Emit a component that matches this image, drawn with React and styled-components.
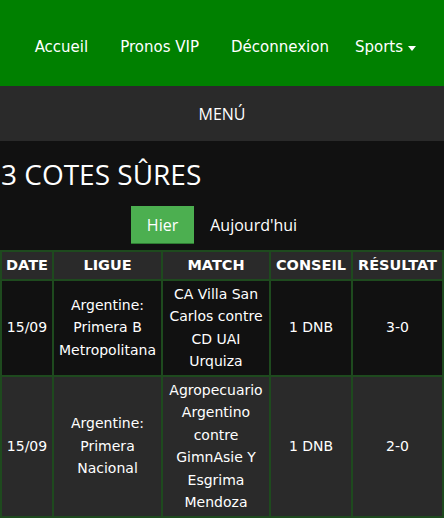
import React, { useState } from "react"
import styled, { createGlobalStyle } from "styled-components"

const GlobalStyle = createGlobalStyle`
  html, body {
    margin: 0;
    padding: 0;
    background: #111111;
  }
  body {
    font-family: "DejaVu Sans", Verdana, sans-serif;
    color: #ffffff;
  }
`

const TopBar = styled.nav`
  height: 86px;
  box-sizing: border-box;
  padding: 8px 12px 0 0;
  background: #008000;
  display: flex;
  align-items: center;
  justify-content: flex-end;
`

const NavLink = styled.a`
  display: flex;
  align-items: center;
  gap: 5px;
  padding: 0 16px 0 ${p => (p.$narrow ? "10px" : "16px")};
  font-size: 15px;
  color: #ffffff;
  text-decoration: none;
  cursor: pointer;
`

const Caret = styled.span`
  width: 0;
  height: 0;
  border-left: 4px solid transparent;
  border-right: 4px solid transparent;
  border-top: 5px solid #ffffff;
  margin-top: 2px;
`

const MenuBar = styled.div`
  height: 55px;
  background: #2a2a2a;
  display: flex;
  align-items: center;
  justify-content: center;
  font-family: "Open Sans", "Noto Sans", sans-serif;
  font-size: 16px;
`

const Title = styled.h1`
  margin: 0;
  padding: 12px 0 0 1px;
  font-family: "Open Sans", "Noto Sans", sans-serif;
  font-weight: 400;
  font-size: 28px;
  line-height: 42px;
`

const Tabs = styled.div`
  display: flex;
  justify-content: center;
  padding-top: 11px;
  margin-bottom: 6px;
`

const Tab = styled.button`
  height: 38px;
  padding: 0 16px;
  border: none;
  background: ${p => (p.$active ? "#4caf50" : "transparent")};
  box-shadow: ${p => (p.$active ? "inset 0 -1px 0 #2e7d32" : "none")};
  color: #ffffff;
  font-family: "Open Sans", "Noto Sans", sans-serif;
  font-size: 16px;
  cursor: pointer;
`

const Table = styled.table`
  width: 442px;
  border-collapse: collapse;
  table-layout: fixed;
`

const Row = styled.tr`
  background: ${p => (p.$alt ? "#2a2a2a" : "#111111")};
`

const HeadCell = styled.th`
  border: 2px solid #1e4a1e;
  padding: 2px 1px;
  font-size: 14.5px;
  line-height: 22.5px;
  font-weight: 700;
  text-align: center;
  white-space: nowrap;
`

const Cell = styled.td`
  border: 2px solid #1e4a1e;
  padding: 2px;
  font-size: 14px;
  line-height: 22.5px;
  text-align: center;
  vertical-align: middle;
`

const tips = [
  {
    date: "15/09",
    league: "Argentine: Primera B Metropolitana",
    match: "CA Villa San Carlos contre CD UAI Urquiza",
    tip: "1 DNB",
    result: "3-0",
  },
  {
    date: "15/09",
    league: "Argentine: Primera Nacional",
    match: "Agropecuario Argentino contre GimnAsie Y Esgrima Mendoza",
    tip: "1 DNB",
    result: "2-0",
  },
]

const App = () => {
  const [day, setDay] = useState("hier")

  return (
    <>
      <GlobalStyle />
      <TopBar>
        <NavLink>Accueil</NavLink>
        <NavLink>Pronos VIP</NavLink>
        <NavLink>Déconnexion</NavLink>
        <NavLink $narrow>
          Sports <Caret />
        </NavLink>
      </TopBar>
      <MenuBar>MENÚ</MenuBar>
      <Title>3 COTES SÛRES</Title>
      <Tabs>
        <Tab $active={day === "hier"} onClick={() => setDay("hier")}>
          Hier
        </Tab>
        <Tab $active={day === "auj"} onClick={() => setDay("auj")}>
          Aujourd'hui
        </Tab>
      </Tabs>
      <Table>
        <colgroup>
          <col style={{ width: 52 }} />
          <col style={{ width: 109 }} />
          <col style={{ width: 108 }} />
          <col style={{ width: 82 }} />
          <col style={{ width: 91 }} />
        </colgroup>
        <thead>
          <Row $alt>
            <HeadCell>DATE</HeadCell>
            <HeadCell>LIGUE</HeadCell>
            <HeadCell>MATCH</HeadCell>
            <HeadCell>CONSEIL</HeadCell>
            <HeadCell>RÉSULTAT</HeadCell>
          </Row>
        </thead>
        <tbody>
          {tips.map((t, i) => (
            <Row $alt={i % 2 === 1} key={i}>
              <Cell>{t.date}</Cell>
              <Cell>{t.league}</Cell>
              <Cell>{t.match}</Cell>
              <Cell>{t.tip}</Cell>
              <Cell>{t.result}</Cell>
            </Row>
          ))}
        </tbody>
      </Table>
    </>
  )
}

export default App
